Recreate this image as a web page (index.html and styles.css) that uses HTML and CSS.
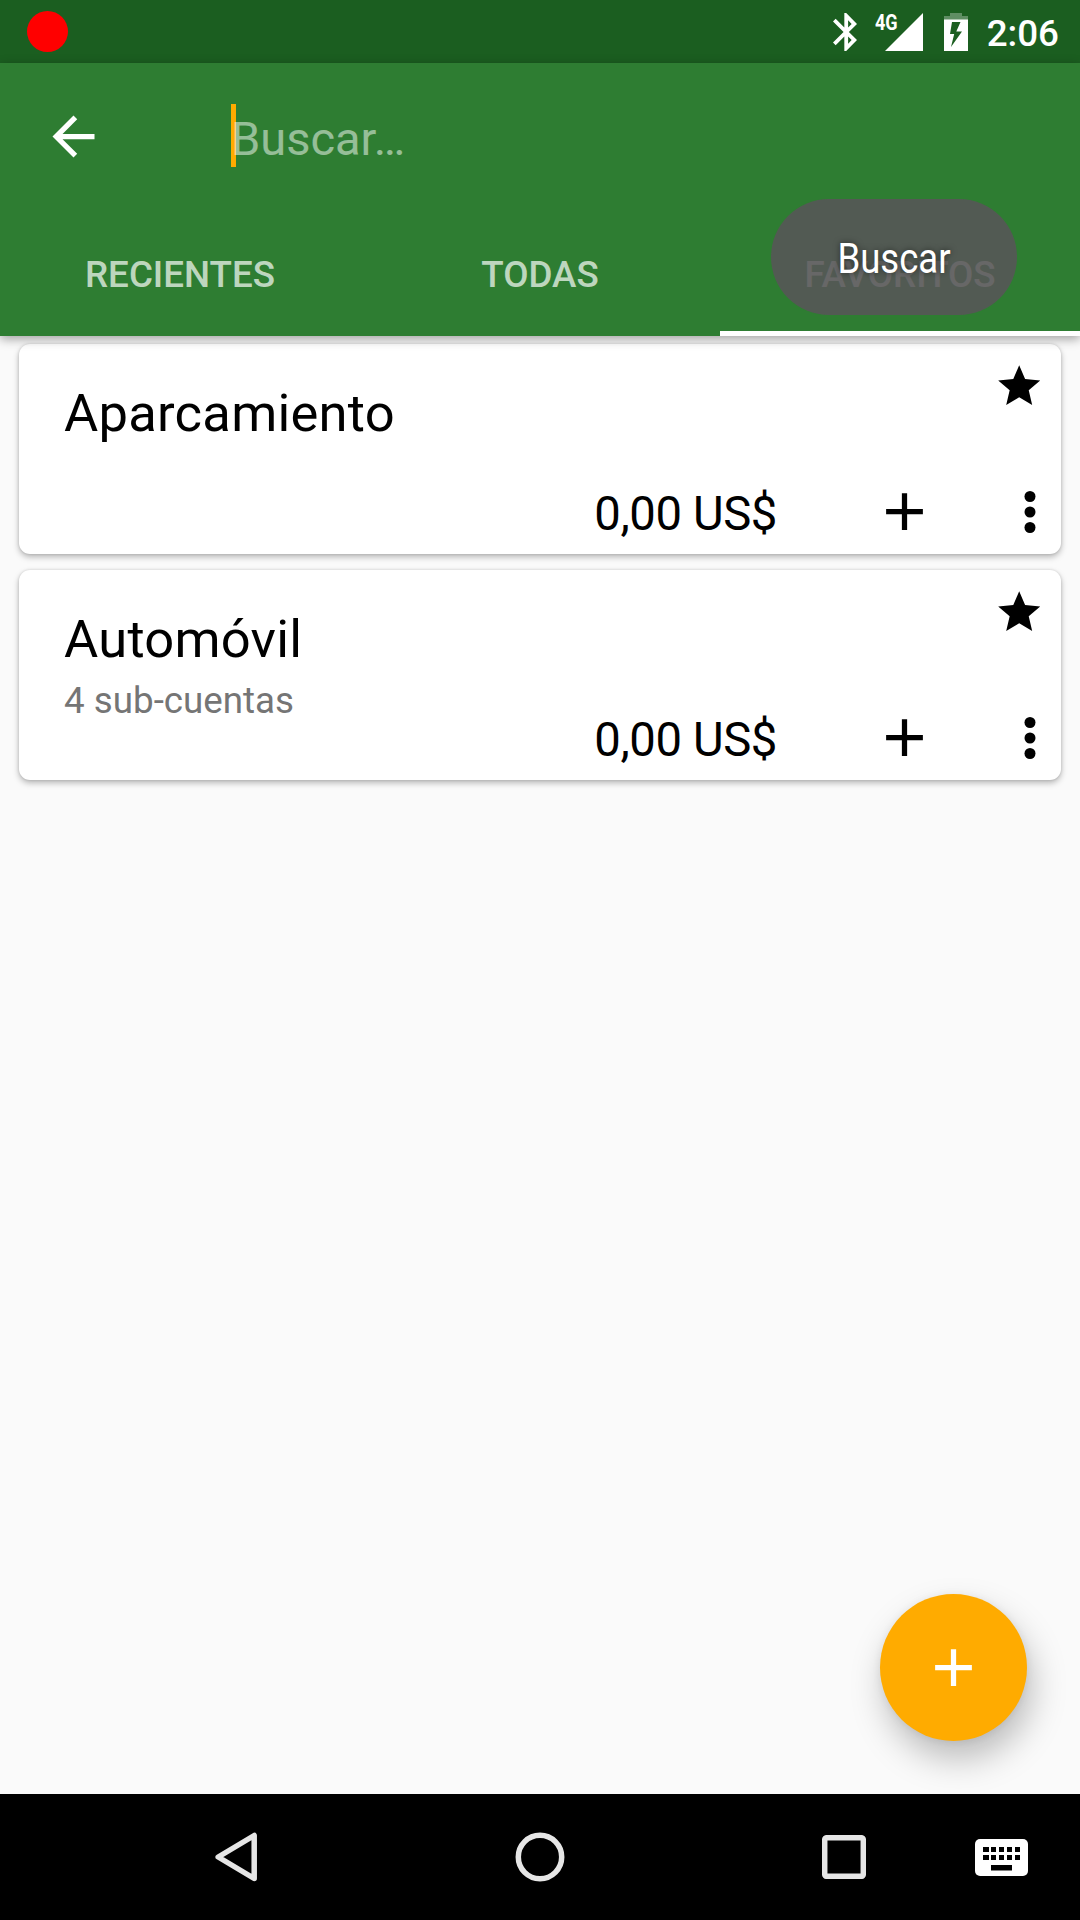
FILE: index.html
```html
<!DOCTYPE html>
<html lang="es">
<head>
<meta charset="utf-8">
<title>Cuentas</title>
<link rel="stylesheet" href="styles.css">
</head>
<body>
<div class="screen">
  <div class="status-bar">
    <span class="record-dot"></span>
    <div class="status-icons">
      <svg class="bluetooth" viewBox="5 2 12.71 20"><path d="M17.71 7.71L12 2h-1v7.59L6.41 5 5 6.41 10.59 12 5 17.59 6.41 19 11 14.41V22h1l5.71-5.71-4.3-4.29 4.3-4.29zM13 5.83l1.88 1.88L13 9.59V5.83zm1.88 10.46L13 18.17v-3.76l1.88 1.88z"/></svg>
      <div class="signal">
        <span class="network">4G</span>
        <svg class="signal-shape" viewBox="0 0 38 38"><path d="M0 38L38 0v38z"/></svg>
      </div>
      <svg class="battery" viewBox="0 0 24 38"><path class="battery-empty" d="M6 0h12v3h6v4H0V3h6z"/><path fill-rule="evenodd" d="M0 6.500h24V38H0zM8 9L6 21h4.200L7 34l11-15.500h-5.700L16.500 9z"/></svg>
      <span class="clock">2:06</span>
    </div>
  </div>

  <header class="app-bar">
    <div class="toolbar">
      <svg class="back" viewBox="0 0 24 24"><path d="M20 11H7.830l5.590-5.590L12 4l-8 8 8 8 1.410-1.410L7.830 13H20z"/></svg>
      <div class="search"><span class="cursor"></span><span class="hint">Buscar…</span></div>
    </div>
    <nav class="tabs">
      <span class="tab"><span>RECIENTES</span></span>
      <span class="tab"><span>TODAS</span></span>
      <span class="tab active"><span>FAVORITOS</span></span>
    </nav>
    <div class="toast"><span>Buscar</span></div>
  </header>

  <main class="content">
    <article class="card">
      <div class="card-head">
        <div class="account">
          <h2>Aparcamiento</h2>
        </div>
        <svg class="star" viewBox="0 0 24 24"><path d="M12 17.270L18.180 21l-1.640-7.030L22 9.240l-7.190-.61L12 2 9.190 8.630 2 9.240l5.460 4.730L5.820 21z"/></svg>
      </div>
      <div class="card-foot">
        <span class="amount">0,00 US$</span>
        <svg class="plus" viewBox="0 0 24 24"><path d="M19 13h-6v6h-2v-6H5v-2h6V5h2v6h6z"/></svg>
        <svg class="more" viewBox="0 0 12 42"><circle cx="6" cy="5.500" r="5.500"/><circle cx="6" cy="21" r="5.500"/><circle cx="6" cy="36.500" r="5.500"/></svg>
      </div>
    </article>
    <article class="card">
      <div class="card-head">
        <div class="account">
          <h2>Automóvil</h2>
          <p>4 sub-cuentas</p>
        </div>
        <svg class="star" viewBox="0 0 24 24"><path d="M12 17.270L18.180 21l-1.640-7.030L22 9.240l-7.190-.61L12 2 9.190 8.630 2 9.240l5.460 4.730L5.820 21z"/></svg>
      </div>
      <div class="card-foot">
        <span class="amount">0,00 US$</span>
        <svg class="plus" viewBox="0 0 24 24"><path d="M19 13h-6v6h-2v-6H5v-2h6V5h2v6h6z"/></svg>
        <svg class="more" viewBox="0 0 12 42"><circle cx="6" cy="5.500" r="5.500"/><circle cx="6" cy="21" r="5.500"/><circle cx="6" cy="36.500" r="5.500"/></svg>
      </div>
    </article>
    <div class="fab"><svg viewBox="0 0 24 24"><path d="M19 13h-6v6h-2v-6H5v-2h6V5h2v6h6z"/></svg></div>
  </main>

  <footer class="nav-bar">
    <svg class="nav-back" viewBox="0 0 43 50"><path d="M3.200 25L39.200 3.500v43z"/></svg>
    <svg class="nav-home" viewBox="0 0 50 50"><circle cx="25" cy="25" r="21.700"/></svg>
    <svg class="nav-recent" viewBox="0 0 44 44"><rect x="2.700" y="2.700" width="38.600" height="38.600" rx="2"/></svg>
    <svg class="nav-keyboard" viewBox="0 0 53 37">
      <rect class="keyboard-body" width="53" height="37" rx="5"/>
      <path d="M8 8h6v5H8zM16 8h5v5h-5zM24 8h5v5h-5zM32 8h5v5h-5zM40 8h5v5h-5zM8 16h6v5H8zM16 16h5v5h-5zM24 16h5v5h-5zM32 16h5v5h-5zM40 16h5v5h-5zM16 26h21v5.500H16z"/>
    </svg>
  </footer>
</div>
</body>
</html>
```

FILE: styles.css
```css
* {
  box-sizing: border-box;
}

body {
  margin: 0;
  font-family: Roboto, "Liberation Sans", sans-serif;
}

svg {
  display: block;
  flex: none;
}

.screen {
  display: flex;
  flex-direction: column;
  width: 1080px;
  height: 1920px;
  overflow: hidden;
  background: #fafafa;
}

/* Status bar */
.status-bar {
  display: flex;
  flex: none;
  align-items: center;
  justify-content: space-between;
  height: 63px;
  padding: 0 21px 0 27px;
  background: #1b5e20;
}

.record-dot {
  width: 41px;
  height: 41px;
  border-radius: 50%;
  background: #f00;
}

.status-icons {
  display: flex;
  align-items: center;
  color: #fff;
  fill: #fff;
}

.bluetooth {
  width: 24px;
  height: 38px;
}

.signal {
  display: flex;
  align-items: flex-start;
  height: 38px;
  margin-left: 18px;
}

.network {
  width: 10px;
  padding-top: 1px;
  font-size: 22px;
  font-weight: 700;
  line-height: 18px;
  white-space: nowrap;
  transform: scaleX(0.82);
  transform-origin: left;
}

.signal-shape {
  width: 38px;
  height: 38px;
}

.battery {
  width: 24px;
  height: 38px;
  margin-left: 21px;
}

.battery-empty {
  fill-opacity: 0.3;
}

.clock {
  padding-top: 5px;
  margin-left: 19px;
  font-size: 36.75px;
  font-weight: 500;
  line-height: 44px;
}

/* App bar */
.app-bar {
  position: relative;
  z-index: 1;
  flex: none;
  height: 273px;
  background: #2e7d32;
  box-shadow: 0 3px 10px rgba(0, 0, 0, 0.36);
}

.toolbar {
  display: flex;
  align-items: center;
  height: 147px;
  padding-left: 42px;
}

.back {
  width: 63px;
  height: 63px;
  fill: #fff;
}

.search {
  display: flex;
  align-items: center;
  margin-left: 126px;
}

.cursor {
  width: 5px;
  height: 63px;
  margin: 0 -5px 2px 0;
  background: #ffab00;
}

.hint {
  z-index: 1;
  padding-top: 4px;
  color: rgba(255, 255, 255, 0.5);
  font-size: 47px;
}

.tabs {
  display: grid;
  grid-template-columns: repeat(3, 1fr);
  height: 126px;
}

.tab {
  display: flex;
  align-items: center;
  justify-content: center;
  padding-top: 7px;
  border-bottom: 5px solid transparent;
  color: rgba(255, 255, 255, 0.7);
  font-size: 36.75px;
  font-weight: 500;
}

.tab.active {
  border-bottom-color: #fff;
  color: #fff;
}

.toast {
  position: absolute;
  top: 136px;
  left: 771px;
  display: flex;
  align-items: center;
  justify-content: center;
  width: 246px;
  height: 116px;
  padding-top: 2px;
  border-radius: 58px;
  background: rgba(86, 86, 86, 0.9);
  color: #fff;
  font-size: 42px;
  text-shadow: 0 0 7px rgba(0, 0, 0, 0.55);
}

.toast span {
  transform: scaleX(0.87);
}

/* Account list */
.content {
  position: relative;
  display: flex;
  flex: 1;
  flex-direction: column;
  gap: 16px;
  padding: 8px 19px 0;
}

.card {
  display: flex;
  flex-direction: column;
  justify-content: space-between;
  height: 210px;
  padding: 17px 17px 11px 45px;
  border-radius: 11px;
  background: #fff;
  box-shadow: 0 3px 6px rgba(0, 0, 0, 0.27), 0 0 3px rgba(0, 0, 0, 0.14);
}

.card-head {
  display: flex;
  justify-content: space-between;
  height: 112px;
}

.account {
  padding-top: 21px;
}

.account h2 {
  margin: 0;
  font-size: 52.5px;
  font-weight: 400;
  letter-spacing: 0.25px;
  line-height: 62px;
}

.account p {
  margin: 9px 0 0;
  color: #757575;
  font-size: 36.75px;
  line-height: 43px;
}

.star {
  width: 50.4px;
  height: 50.4px;
}

.card-foot {
  display: flex;
  align-items: center;
  justify-content: flex-end;
  height: 63px;
}

.amount {
  padding-top: 5px;
  font-size: 47.25px;
  letter-spacing: -0.4px;
  line-height: 56px;
}

.plus {
  width: 63px;
  height: 63px;
  margin-left: 96px;
}

.more {
  width: 12px;
  height: 42px;
  margin: 0 8px 0 88px;
}

.fab {
  position: absolute;
  right: 53px;
  bottom: 53px;
  display: flex;
  align-items: center;
  justify-content: center;
  width: 147px;
  height: 147px;
  border-radius: 50%;
  background: #ffab00;
  box-shadow: 5px 18px 34px rgba(0, 0, 0, 0.25), 0 1px 8px rgba(0, 0, 0, 0.07);
}

.fab svg {
  width: 63px;
  height: 63px;
  fill: #fff;
}

/* System navigation */
.nav-bar {
  z-index: 1;
  display: flex;
  flex: none;
  align-items: center;
  height: 126px;
  padding-left: 215px;
  background: #000;
}

.nav-back,
.nav-home,
.nav-recent {
  fill: none;
  stroke: #e6e6e6;
  stroke-width: 5.5px;
  stroke-linejoin: round;
}

.nav-back {
  width: 43px;
  height: 50px;
}

.nav-home {
  width: 50px;
  height: 50px;
  margin-left: 257px;
}

.nav-recent {
  width: 44px;
  height: 44px;
  margin-left: 257px;
}

.nav-keyboard {
  width: 53px;
  height: 37px;
  margin: 1px 0 0 109px;
}

.keyboard-body {
  fill: #fff;
}
```
